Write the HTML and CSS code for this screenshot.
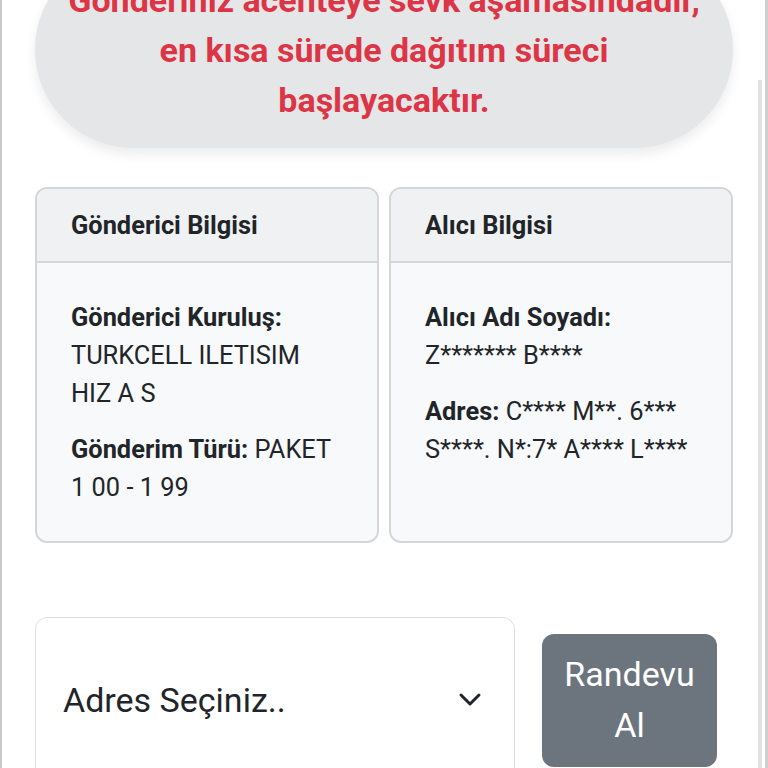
FILE: index.html
```html
<!DOCTYPE html>
<html lang="tr">
<head>
<meta charset="utf-8">
<link rel="stylesheet" href="styles.css">
</head>
<body>
<div class="page">
  <div class="banner">Gönderiniz acenteye sevk aşamasındadır,<br>en kısa sürede dağıtım süreci<br>başlayacaktır.</div>
  <div class="cards">
    <div class="card">
      <div class="card-head">Gönderici Bilgisi</div>
      <div class="card-body">
        <p><b>Gönderici Kuruluş:</b><br>TURKCELL ILETISIM<br>HIZ A S</p>
        <p><b>Gönderim Türü:</b> PAKET<br>1 00 - 1 99</p>
      </div>
    </div>
    <div class="card">
      <div class="card-head">Alıcı Bilgisi</div>
      <div class="card-body">
        <p><b>Alıcı Adı Soyadı:</b><br>Z******* B****</p>
        <p><b>Adres:</b> C**** M**. 6***<br>S****. N*:7* A**** L****</p>
      </div>
    </div>
  </div>
  <div class="actions">
    <div class="select">
      <span>Adres Seçiniz..</span>
      <svg class="chev" width="24" height="16" viewBox="0 0 24 16"><path d="M3 3 L12 12 L21 3" fill="none" stroke="#212529" stroke-width="3" stroke-linecap="round" stroke-linejoin="round"/></svg>
    </div>
    <div class="btn">Randevu<br>Al</div>
  </div>
</div>
</body>
</html>
```
FILE: styles.css
```css
html, body {
  margin: 0;
  padding: 0;
  background: #fff;
}
body {
  font-family: Roboto, "Liberation Sans", sans-serif;
  color: #212529;
  font-size: 25.4px;
  line-height: 1.5;
  overflow: hidden;
}
.page {
  position: relative;
  height: 768px;
  box-sizing: border-box;
  border-left: 2px solid #c9c9c9;
  border-right: 3px solid #cfcfcf;
  padding: 0 32px 0 33px;
  overflow: hidden;
}
.page::after {
  content: "";
  position: absolute;
  right: 3px;
  top: 80px;
  bottom: 0;
  width: 4px;
  background: #e2e2e2;
}
.banner {
  margin-top: -49px;
  background: #e5e6e8;
  border-radius: 100px;
  padding: 24px 10px 23px;
  text-align: center;
  color: #dc3545;
  font-weight: 700;
  font-size: 34px;
  line-height: 50px;
  white-space: nowrap;
  box-shadow: 0 6px 12px rgba(0,0,0,0.08);
}
.cards {
  margin-top: 39px;
  display: grid;
  grid-template-columns: 1fr 1fr;
  gap: 10px;
}
.card {
  border: 2px solid #d5d6d7;
  border-radius: 12px;
  background: #f8f9fa;
  overflow: hidden;
}
.card-head {
  background: #f0f1f2;
  border-bottom: 2px solid #d5d6d7;
  padding: 17px 34px;
  font-weight: 700;
  font-size: 25.4px;
  line-height: 38px;
}
.card-body {
  padding: 35px 34px 17px;
}
.card-body p {
  margin: 0 0 18px;
  line-height: 38px;
}
.card-body b {
  font-weight: 700;
}
.actions {
  margin-top: 74px;
  display: flex;
  align-items: center;
  gap: 27px;
}
.select {
  width: 480px;
  height: 166px;
  box-sizing: border-box;
  border: 1px solid #dcdfe2;
  border-radius: 12px;
  background: #fff;
  display: flex;
  align-items: center;
  justify-content: space-between;
  padding: 0 32px 0 27px;
  font-size: 34px;
}
.chev {
  display: block;
}
.btn {
  width: 175px;
  box-sizing: border-box;
  background: #6c757d;
  color: #fff;
  border-radius: 12px;
  text-align: center;
  font-size: 34px;
  line-height: 51px;
  padding: 15px 0 16px;
}
```
